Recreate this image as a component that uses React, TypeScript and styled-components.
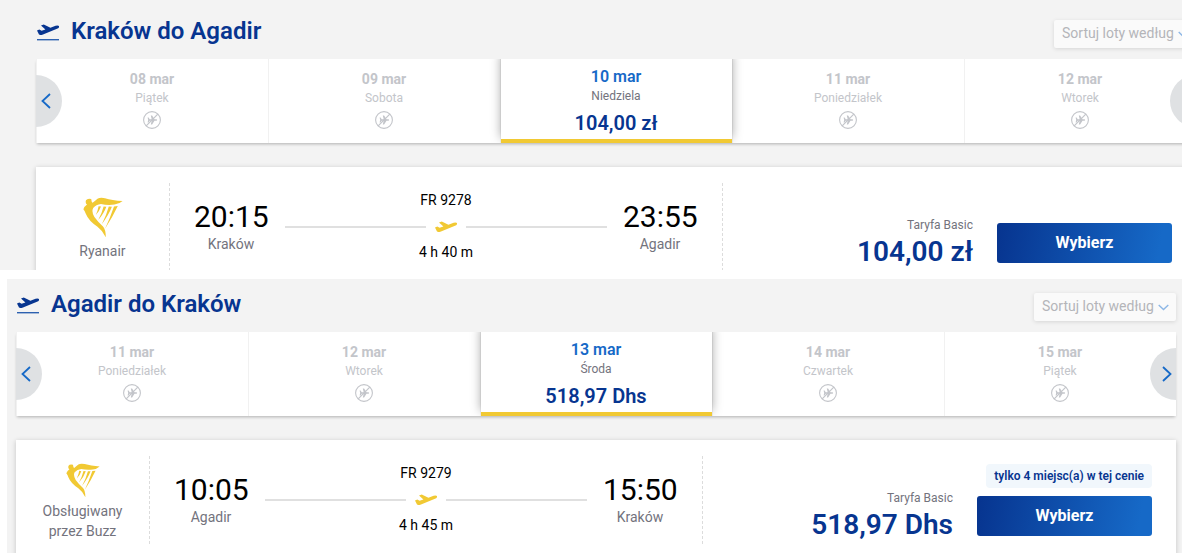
import styled, { createGlobalStyle } from "styled-components";

type Day = {
    date: string,
    weekday: string,
    price?: string,
}

type Flight = {
    title: string,
    days: Day[],
    operator: string,
    logoSize: number,
    number: string,
    duration: string,
    from: string,
    to: string,
    departure: string,
    arrival: string,
    price: string,
    seatsLeft?: string,
}

const NAVY = "#073590";
const BLUE = "#1669c7";
const YELLOW = "#f1c933";

const outbound: Flight = {
    title: "Kraków do Agadir",
    days: [
        { date: "08 mar", weekday: "Piątek" },
        { date: "09 mar", weekday: "Sobota" },
        { date: "10 mar", weekday: "Niedziela", price: "104,00 zł" },
        { date: "11 mar", weekday: "Poniedziałek" },
        { date: "12 mar", weekday: "Wtorek" },
    ],
    operator: "Ryanair",
    logoSize: 40,
    number: "FR 9278",
    duration: "4 h 40 m",
    from: "Kraków",
    to: "Agadir",
    departure: "20:15",
    arrival: "23:55",
    price: "104,00 zł",
};

const inbound: Flight = {
    title: "Agadir do Kraków",
    days: [
        { date: "11 mar", weekday: "Poniedziałek" },
        { date: "12 mar", weekday: "Wtorek" },
        { date: "13 mar", weekday: "Środa", price: "518,97 Dhs" },
        { date: "14 mar", weekday: "Czwartek" },
        { date: "15 mar", weekday: "Piątek" },
    ],
    operator: "Obsługiwany przez Buzz",
    logoSize: 34,
    number: "FR 9279",
    duration: "4 h 45 m",
    from: "Agadir",
    to: "Kraków",
    departure: "10:05",
    arrival: "15:50",
    price: "518,97 Dhs",
    seatsLeft: "tylko 4 miejsc(a) w tej cenie",
};

const GlobalStyle = createGlobalStyle`
    * {
        box-sizing: border-box;
    }

    body {
        margin: 0;
        background: #ffffff;
        font-family: Roboto, "Liberation Sans", sans-serif;
    }

    svg {
        display: block;
        flex: none;
    }
`;

const Page = styled.div`
    display: flex;
    flex-direction: column;
    gap: 9px;
    width: 1182px;
    height: 553px;
    overflow: hidden;
`;

const Journey = styled.section<{ $inset?: boolean }>`
    flex: none;
    height: ${({ $inset }) => $inset ? 274 : 270}px;
    margin-left: ${({ $inset }) => $inset ? 7 : 0}px;
    padding: ${({ $inset }) => $inset ? "14px 0 0 9px" : "20px 0 0 36px"};
    background: #f3f3f3;
    overflow: hidden;
`;

const Content = styled.div`
    width: 1160px;
`;

const Header = styled.header`
    display: flex;
    align-items: center;
    height: 28px;
    margin-bottom: 11px;
`;

const Title = styled.h2`
    flex: 1;
    margin: 0 0 6px 12px;
    color: ${NAVY};
    font-size: 24px;
    line-height: 28px;
    font-weight: 600;
`;

const TakeoffWrap = styled.div`
    padding: 0 0 3px 1px;
`;

const SortButton = styled.button`
    display: flex;
    align-items: center;
    gap: 4px;
    width: 142px;
    height: 28px;
    padding: 0 8px;
    border: 0;
    border-radius: 2px;
    background: #fafafa;
    box-shadow: 0 1px 4px rgba(0, 0, 0, 0.12);
    color: #b4b5b9;
    font: 400 14px/28px Roboto, sans-serif;
    white-space: nowrap;

    span {
        padding-bottom: 2px;
    }
`;

const Carousel = styled.div`
    position: relative;
    height: 84px;
    margin-bottom: 24px;
    box-shadow: 0 2px 3px -1px rgba(0, 0, 0, 0.28);
`;

const Days = styled.div`
    display: flex;
    height: 100%;
    overflow: hidden;
`;

const DayCell = styled.div<{ $selected: boolean }>`
    display: flex;
    flex-direction: column;
    align-items: center;
    flex: 1;
    padding-top: ${({ $selected }) => $selected ? 9 : 11}px;
    padding-right: 1px;
    border-left: 1px solid #f1f1f1;
    background: #ffffff;
    color: #c3c5ca;
    font-size: 12px;
    line-height: 16px;

    ${({ $selected }) => $selected && `
        z-index: 1;
        border-bottom: 4px solid ${YELLOW};
        border-left: 0;
        margin-left: 1px;
        box-shadow: 0 -5px 10px rgba(0, 0, 0, 0.35);
        color: #73737d;
    `}
`;

const DayDate = styled.div<{ $selected: boolean }>`
    color: ${({ $selected }) => $selected ? BLUE : "#c3c5ca"};
    font-size: ${({ $selected }) => $selected ? 16 : 14}px;
    font-weight: ${({ $selected }) => $selected ? 600 : 700};
    line-height: 18px;
    margin-bottom: 2px;
`;

const DayPrice = styled.div`
    margin-top: 7px;
    color: ${NAVY};
    font-size: 20px;
    font-weight: 600;
    line-height: 24px;
`;

const NoFlight = styled.div`
    margin-top: 5px;
`;

const NavButton = styled.button<{ $side: "left" | "right" }>`
    position: absolute;
    z-index: 2;
    top: 16px;
    ${({ $side }) => $side}: 0;
    display: flex;
    align-items: center;
    justify-content: center;
    width: 26px;
    height: 52px;
    padding: 0;
    padding-${({ $side }) => $side === "left" ? "right" : "left"}: 7px;
    border: 0;
    border-radius: ${({ $side }) => $side === "left" ? "0 26px 26px 0" : "26px 0 0 26px"};
    background: #dfe1e3;
`;

const Card = styled.article`
    display: flex;
    height: 120px;
    padding: 16px 24px 16px 0;
    background: #ffffff;
    box-shadow: 0 1px 5px rgba(0, 0, 0, 0.2);
`;

const Operator = styled.div`
    display: flex;
    flex-direction: column;
    align-items: center;
    justify-content: center;
    gap: 4px;
    width: 133px;
    padding: 3px 20px 0;
    color: #73737d;
    font-size: 14px;
    line-height: 20px;
    text-align: center;
`;

const Divider = styled.div`
    width: 1px;
    background: repeating-linear-gradient(to bottom, #dcdcdc 0 3px, transparent 3px 5px);
`;

const Schedule = styled.div`
    display: flex;
    align-items: center;
    width: 552px;
    padding: 0 24px;
`;

const Stop = styled.div`
    width: 75px;
    padding-right: 1px;
    text-align: center;
    white-space: nowrap;

    .time {
        color: #000000;
        font-size: 30px;
        line-height: 34px;
    }

    .city {
        color: #73737d;
        font-size: 14px;
        line-height: 20px;
    }
`;

const Route = styled.div`
    flex: 1;
    display: flex;
    flex-direction: column;
    align-items: center;
    gap: 8px;
    padding: 0 16px;
    color: #000000;
    font-size: 14px;
    line-height: 18px;

    > div:first-child, > div:last-child {
        padding-bottom: 2px;
    }
`;

const RouteLine = styled.div`
    display: flex;
    align-items: center;
    gap: 8px;
    width: 100%;
    height: 16px;

    &::before, &::after {
        content: "";
        flex: 1;
        height: 2px;
        background: #e0e0e0;
    }
`;

const Fare = styled.div`
    flex: 1;
    display: flex;
    flex-direction: column;
    justify-content: flex-end;
    align-items: flex-end;
    padding: 0 24px 1px 0;

    .label {
        color: #73737d;
        font-size: 12px;
        line-height: 16px;
    }

    .amount {
        color: ${NAVY};
        font-size: 28px;
        font-weight: 600;
        line-height: 37px;
    }
`;

const Purchase = styled.div`
    display: flex;
    flex-direction: column;
    align-items: flex-end;
    justify-content: flex-end;
    gap: 8px;
    width: 175px;
    padding-bottom: 8px;
`;

const SeatsBadge = styled.div`
    height: 24px;
    padding: 0 8px;
    border-radius: 4px;
    background: #f1f7fc;
    color: ${NAVY};
    font-size: 12px;
    font-weight: 600;
    line-height: 24px;
    white-space: nowrap;
`;

const SelectButton = styled.button`
    width: 100%;
    height: 40px;
    padding: 0;
    border: 0;
    border-radius: 3px;
    background: linear-gradient(100deg, ${NAVY} 2%, ${BLUE} 92%);
    color: #ffffff;
    font: 700 16px/38px Roboto, sans-serif;
`;

const PLANE = "M0 6.4 L2.3 5.5 L4.6 6.8 L8.4 5.6 L4 1.4 L6.8 .5 L13.4 3.8 L18.6 1.8 Q21 1.1 22 2 Q22.4 3.4 21.2 4.2 L6 10.4 Q3 11.5 2 10.5 Z";

const Takeoff = () => (
    <svg width="22" height="17" viewBox="0 0 22 17">
        <path d={PLANE} fill={NAVY} />
        <rect y="15" width="22" height="1.4" fill="#2d61b0" />
    </svg>
);

const RoutePlane = () => (
    <svg width="24" height="12" viewBox="0 0 22 12">
        <path d={PLANE} fill={YELLOW} />
    </svg>
);

const NoFlightIcon = () => (
    <svg width="18" height="18" viewBox="0 0 18 18">
        <circle cx="9" cy="9" r="8.4" fill="none" stroke="#c3c5ca" strokeWidth="1.1" />
        <path
            d="M4.6 6.6h1l1.1 1.7h2L7.8 4.4h1.3l2.4 3.9h2.1q1.2.7 0 1.4h-2.1l-2.4 3.9H7.8l.9-3.9h-2l-1.1 1.7h-1L5.2 9z"
            fill="#c3c5ca"
        />
        <path d="M3.2 14.8 14.8 3.2" stroke="#c3c5ca" strokeWidth="1.2" />
    </svg>
);

const Chevron = ({ right }: { right?: boolean }) => (
    <svg width="10" height="16" viewBox="0 0 10 16" fill="none" stroke={BLUE} strokeWidth="1.8">
        <path d={right ? "M1 1l7.5 7-7.5 7" : "M9 1L1.5 8 9 15"} />
    </svg>
);

const ChevronDown = () => (
    <svg width="11" height="7" viewBox="0 0 11 7" fill="none" stroke="#8db7e6" strokeWidth="1.4">
        <path d="M.7 1l4.8 4.6L10.3 1" />
    </svg>
);

const Harp = ({ size }: { size: number }) => (
    <svg width={size} height={size} viewBox="0 0 40 40" fill={YELLOW}>
        <path d="M3 3.2Q4.5 1 8.2 2L8.8 5 9.6 5.8Q12 4 14.5 1.8 17 .2 22 1.2 29 3.4 39.6 4 36 7.2 31.5 7.6 24 8.4 18 7 13 7.4 10.2 11 8.2 14.4 11.4 20 15 25 20 29.4 22.8 32.4 22.8 40.4Q20 34 14.5 29.8 5.6 23.8 2.8 16.8 2.2 14.4.4 12.2 1.6 9 4 7.4 2 6 3 3.2Z" />
        <path d="M15.6 9.2l2.4.4Q16.6 14 12.8 18 14.8 13.6 15.6 9.2Z" />
        <path d="M20.6 9.4l2.7.3Q21.2 16 15.2 23 19 16 20.6 9.4Z" />
        <path d="M25.8 9.6l3.1.2Q25.8 17.8 18.8 27.2 23.6 18 25.8 9.6Z" />
        <path d="M31 9.4l3.8-.4Q29.6 20 22 31.8 27.2 20.6 31 9.4Z" />
    </svg>
);

const DayView = ({ day: { date, weekday, price } }: { day: Day }) => (
    <DayCell $selected={!!price}>
        <DayDate $selected={!!price}>{date}</DayDate>
        <div>{weekday}</div>
        {price ? <DayPrice>{price}</DayPrice> : <NoFlight><NoFlightIcon /></NoFlight>}
    </DayCell>
);

const JourneyView = ({ flight, inset }: { flight: Flight, inset?: boolean }) => (
    <Journey $inset={inset}>
        <Content>
            <Header>
                <TakeoffWrap><Takeoff /></TakeoffWrap>
                <Title>{flight.title}</Title>
                <SortButton>
                    <span>Sortuj loty według</span>
                    <ChevronDown />
                </SortButton>
            </Header>
            <Carousel>
                <Days>
                    {flight.days.map((day) => <DayView key={day.date} day={day} />)}
                </Days>
                <NavButton $side="left"><Chevron /></NavButton>
                <NavButton $side="right"><Chevron right /></NavButton>
            </Carousel>
            <Card>
                <Operator>
                    <Harp size={flight.logoSize} />
                    {flight.operator}
                </Operator>
                <Divider />
                <Schedule>
                    <Stop>
                        <div className="time">{flight.departure}</div>
                        <div className="city">{flight.from}</div>
                    </Stop>
                    <Route>
                        <div>{flight.number}</div>
                        <RouteLine><RoutePlane /></RouteLine>
                        <div>{flight.duration}</div>
                    </Route>
                    <Stop>
                        <div className="time">{flight.arrival}</div>
                        <div className="city">{flight.to}</div>
                    </Stop>
                </Schedule>
                <Divider />
                <Fare>
                    <div className="label">Taryfa Basic</div>
                    <div className="amount">{flight.price}</div>
                </Fare>
                <Purchase>
                    {flight.seatsLeft && <SeatsBadge>{flight.seatsLeft}</SeatsBadge>}
                    <SelectButton>Wybierz</SelectButton>
                </Purchase>
            </Card>
        </Content>
    </Journey>
);

export default function App() {
    return (
        <>
            <GlobalStyle />
            <Page>
                <JourneyView flight={outbound} />
                <JourneyView flight={inbound} inset />
            </Page>
        </>
    );
}
